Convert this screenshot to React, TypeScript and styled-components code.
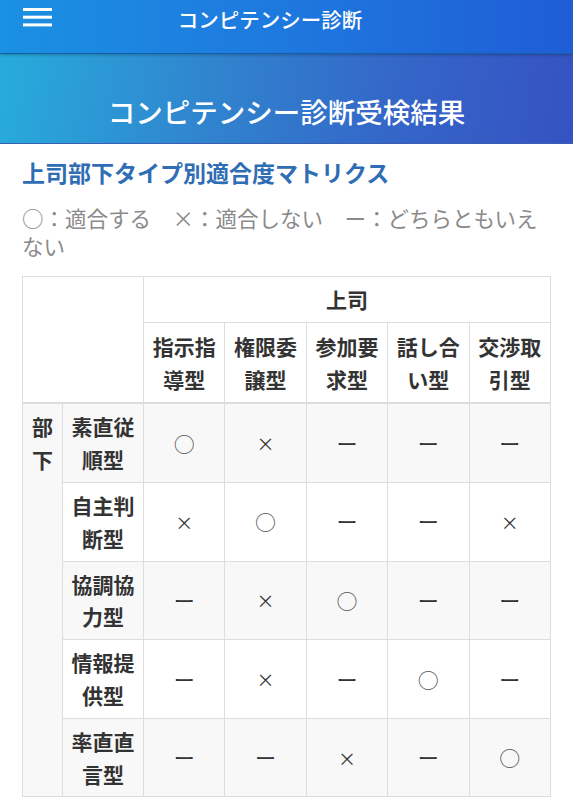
import React from 'react'
import styled, { createGlobalStyle } from 'styled-components'

const GlobalStyle = createGlobalStyle`
  html, body {
    margin: 0;
    padding: 0;
    background: #fff;
  }

  body {
    font-family: "Noto Sans CJK JP", "Noto Sans", sans-serif;
    color: #333;
  }
`

const AppBar = styled.header`
  position: relative;
  z-index: 2;
  display: grid;
  grid-template-columns: 74px 1fr 107px;
  align-items: center;
  height: 38px;
  padding-bottom: 15px;
  background: linear-gradient(90deg, #1a91e2 0%, #1e78de 50%, #1f5dd6 100%);
  box-shadow: 0 1px 0 #1460a8, 0 2px 3px rgba(0, 0, 0, 0.25);
`

const MenuButton = styled.button`
  display: flex;
  align-items: center;
  height: 38px;
  padding: 0 0 0 23px;
  border: 0;
  background: transparent;
  cursor: pointer;
`

const BarTitle = styled.h1`
  margin: 0;
  color: #fff;
  font-size: 20.5px;
  font-weight: 500;
  line-height: 38px;
  text-align: center;
  white-space: nowrap;
`

const Banner = styled.section`
  display: flex;
  align-items: center;
  justify-content: center;
  height: 90px;
  background: linear-gradient(100deg, #27acdc 0%, #3086cf 35%, #3465c8 70%, #3552c2 100%);
  border-bottom: 1px solid #3a5fb0;
`

const BannerTitle = styled.h2`
  margin: 26px 0 0;
  color: #fff;
  font-size: 27.5px;
  font-weight: 500;
`

const Content = styled.main`
  padding: 12px 22px 20px;
`

const SectionTitle = styled.h3`
  margin: 0;
  color: #2f6db5;
  font-size: 23px;
  font-weight: 700;
  line-height: 32px;
`

const Legend = styled.p`
  margin: 16px 0 16px;
  color: #8a8a8a;
  font-size: 21.5px;
  line-height: 28px;
`

const Matrix = styled.table`
  width: 100%;
  border-collapse: collapse;
  table-layout: fixed;
  font-size: 21px;
  line-height: 32.8px;
  color: #333;
`

const Cell = styled.td<{ $striped?: boolean }>`
  padding: 6px 4px;
  border: 1px solid #ddd;
  text-align: center;
  vertical-align: middle;
  background: ${(p) => (p.$striped ? '#f8f8f8' : '#fff')};
`

const HeadCell = styled(Cell).attrs({ as: 'th' })<{ $thick?: boolean; $top?: boolean }>`
  font-weight: 700;
  border-bottom-width: ${(p) => (p.$thick ? '2px' : '1px')};
  vertical-align: ${(p) => (p.$top ? 'top' : 'middle')};
  padding-left: 8px;
  padding-right: 8px;
`

const ColumnHead = styled(HeadCell)`
  padding-top: 7px;
  padding-bottom: 7px;
`

const Mark = styled.span<{ $kind: string }>`
  display: inline-block;
  font-weight: 400;
  color: ${(p) => (p.$kind === '○' ? '#555' : '#333')};
  font-size: ${(p) => (p.$kind === '×' ? '18px' : '21px')};
`

const MenuIcon = () => (
  <svg width="29" height="22" viewBox="0 0 29 22">
    <rect x="0" y="0" width="29" height="3" fill="#fff" />
    <rect x="0" y="7.7" width="29" height="3" fill="#fff" />
    <rect x="0" y="15.4" width="29" height="3" fill="#fff" />
  </svg>
)

const bossTypes = ['指示指導型', '権限委譲型', '参加要求型', '話し合い型', '交渉取引型']

const rows: { name: string; marks: string[] }[] = [
  { name: '素直従順型', marks: ['○', '×', 'ー', 'ー', 'ー'] },
  { name: '自主判断型', marks: ['×', '○', 'ー', 'ー', '×'] },
  { name: '協調協力型', marks: ['ー', '×', '○', 'ー', 'ー'] },
  { name: '情報提供型', marks: ['ー', '×', 'ー', '○', 'ー'] },
  { name: '率直直言型', marks: ['ー', 'ー', '×', 'ー', '○'] },
]

const App = () => {
  return (
    <>
      <GlobalStyle />
      <AppBar>
        <MenuButton aria-label="menu">
          <MenuIcon />
        </MenuButton>
        <BarTitle>コンピテンシー診断</BarTitle>
        <span />
      </AppBar>
      <Banner>
        <BannerTitle>コンピテンシー診断受検結果</BannerTitle>
      </Banner>
      <Content>
        <SectionTitle>上司部下タイプ別適合度マトリクス</SectionTitle>
        <Legend>○：適合する　×：適合しない　ー：どちらともいえない</Legend>
        <Matrix>
          <colgroup>
            <col style={{ width: 40 }} />
            <col style={{ width: 81 }} />
            {bossTypes.map((b) => (
              <col key={b} />
            ))}
          </colgroup>
          <thead>
            <tr>
              <HeadCell colSpan={2} rowSpan={2} $thick />
              <HeadCell colSpan={5}>上司</HeadCell>
            </tr>
            <tr>
              {bossTypes.map((b) => (
                <ColumnHead key={b} $thick>
                  {b}
                </ColumnHead>
              ))}
            </tr>
          </thead>
          <tbody>
            {rows.map((r, i) => (
              <tr key={r.name}>
                {i === 0 && (
                  <HeadCell rowSpan={rows.length} $striped $top>
                    部下
                  </HeadCell>
                )}
                <HeadCell $striped={i % 2 === 0}>{r.name}</HeadCell>
                {r.marks.map((m, j) => (
                  <Cell key={j} $striped={i % 2 === 0}>
                    <Mark $kind={m}>{m}</Mark>
                  </Cell>
                ))}
              </tr>
            ))}
          </tbody>
        </Matrix>
      </Content>
    </>
  )
}

export default App
